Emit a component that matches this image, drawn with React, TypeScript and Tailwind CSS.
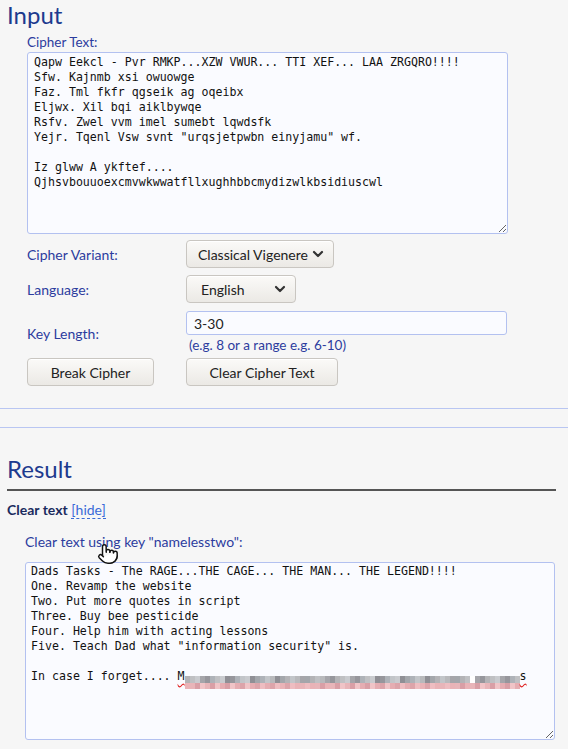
import { Pointer } from 'lucide-react'

const cipherText = `Qapw Eekcl - Pvr RMKP...XZW VWUR... TTI XEF... LAA ZRGQRO!!!!
Sfw. Kajnmb xsi owuowge
Faz. Tml fkfr qgseik ag oqeibx
Eljwx. Xil bqi aiklbywqe
Rsfv. Zwel vvm imel sumebt lqwdsfk
Yejr. Tqenl Vsw svnt "urqsjetpwbn einyjamu" wf.

Iz glww A ykftef....
Qjhsvbouuoexcmvwkwwatfllxughhbbcmydizwlkbsidiuscwl`

const clearLines = [
  'Dads Tasks - The RAGE...THE CAGE... THE MAN... THE LEGEND!!!!',
  'One. Revamp the website',
  'Two. Put more quotes in script',
  'Three. Buy bee pesticide',
  'Four. Help him with acting lessons',
  'Five. Teach Dad what "information security" is.',
  '',
]

const grays = ['#b3b3b6', '#a5a5aa', '#bfc0c3', '#96969c', '#c9cbcf', '#aeb2b8', '#8f8f95', '#c2c5c9', '#a3a6ab', '#b8b9bc']
const pinks = ['#e9b3b7', '#eebdc1', '#dca4aa', '#e5adb2', '#f0c4c7', '#d99fa6', '#e8b5b9']

// pixelated blur over the password
function Mosaic() {
  const cells = Array.from({ length: 67 }, (_, i) => ({
    top: grays[(i * 7 + (i % 3) * 5) % grays.length],
    bottom: pinks[(i * 5 + (i % 4)) % pinks.length],
  }))
  return (
    <span className="inline-flex align-[-3px]">
      {cells.map((c, i) => (
        <span key={i} className="flex flex-col w-[5px]">
          <span className="h-[7px]" style={{ background: i === 57 ? '#ffffff' : c.top }} />
          <span className="h-[6px]" style={{ background: c.bottom }} />
        </span>
      ))}
    </span>
  )
}

function Chevron() {
  return (
    <svg width="12" height="8" viewBox="0 0 12 8" fill="none" stroke="#333" strokeWidth={2.2} strokeLinecap="round" strokeLinejoin="round">
      <path d="M2 2l4 4 4-4" />
    </svg>
  )
}

const btn =
  'h-[28px] rounded-[4px] border border-[#c9c6c1] bg-gradient-to-b from-[#fbfaf8] to-[#ebe9e5] text-[14px] text-[#222] shadow-[inset_0_1px_0_#fff] whitespace-nowrap'

export default function App() {
  return (
    <div className="min-h-screen bg-[#f6f6f6] font-['Lato','Open_Sans',sans-serif] text-[#1f2f7f]">
      <div className="pl-[7px] pr-[12px]">
        <h2 className="pt-[1px] text-[24px] leading-[28px] text-[#1d3a8e]">Input</h2>
      </div>

      <div className="pl-[27px] pt-[5px]">
        <div className="text-[13.5px] leading-[16px] text-[#2c3c9e]">Cipher Text:</div>
        <textarea
          className="mt-[2px] block w-[481px] h-[182px] rounded-[3px] border border-[#b3c1f0] bg-[#fafbff] px-[6px] py-[2px] font-['DejaVu_Sans_Mono',monospace] text-[11.6px] leading-[15px] text-[#111] outline-none"
          defaultValue={cipherText}
          spellCheck={false}
        />

        <div className="mt-[6px] grid grid-cols-[159px_1fr] gap-y-[7px] items-center text-[14px] text-[#2c3c9e]">
          <div>Cipher Variant:</div>
          <div>
            <button className={`${btn} flex items-center gap-[4px] pl-[11px] pr-[9px] text-[13.5px]`}>
              Classical Vigenere <Chevron />
            </button>
          </div>

          <div>Language:</div>
          <div>
            <button className={`${btn} flex w-[110px] items-center justify-between pl-[14px] pr-[9px]`}>
              English <Chevron />
            </button>
          </div>

          <div className="pt-[2px]">Key Length:</div>
          <div className="pt-[1px]">
            <input
              className="block h-[24px] w-[321px] rounded-[3px] border border-[#b3c1f0] bg-[#fafbff] px-[7px] text-[14px] text-[#222] outline-none"
              defaultValue="3-30"
            />
            <div className="pl-[3px] pt-[2px] text-[13.5px] leading-[17px] text-[#2c3c9e]">(e.g. 8 or a range e.g. 6-10)</div>
          </div>
        </div>

        <div className="mt-[4px] grid grid-cols-[159px_1fr]">
          <div>
            <button className={`${btn} h-[27px] w-[127px]`}>Break Cipher</button>
          </div>
          <div>
            <button className={`${btn} h-[27px] w-[152px]`}>Clear Cipher Text</button>
          </div>
        </div>
      </div>

      <div className="mt-[22px] border-t border-[#b9c6f2]" />
      <div className="mt-[18px] border-t border-[#b9c6f2]" />

      <div className="pl-[7px] pr-[12px] pt-[27px]">
        <h2 className="text-[24px] leading-[28px] text-[#1d3a8e] pb-[6px] border-b-2 border-[#555]">Result</h2>
        <div className="pt-[10px] text-[14px] leading-[18px]">
          <span className="font-bold text-[#1b2b5e]">Clear text</span>{' '}
          <span className="text-[#3a6ad8] border-b border-dashed border-[#3a6ad8]">[hide]</span>
        </div>
      </div>

      <div className="relative pl-[25px] pr-[13px] pt-[14px]">
        <div className="text-[14px] leading-[18px] text-[#2c3c9e]">Clear text using key "namelesstwo":</div>
        <Pointer className="absolute left-[97px] top-[24px]" size={22} fill="#fff" stroke="#111" strokeWidth={1.6} />
        <div className="mt-[11px] h-[178px] w-[530px] resize overflow-auto rounded-[3px] border border-[#b3c1f0] bg-[#fafbff] px-[5px] py-[1px] font-['DejaVu_Sans_Mono',monospace] text-[11.6px] leading-[15px] text-[#111] whitespace-pre">
          {clearLines.map((l, i) => (
            <div key={i} className="h-[15px]">{l}</div>
          ))}
          <div className="h-[15px]">
            In case I forget....{' '}
            <span className="underline decoration-wavy decoration-[#e02020] underline-offset-[3px]">M</span>
            <Mosaic />
            <span className="underline decoration-wavy decoration-[#e02020] underline-offset-[3px]">s</span>
          </div>
        </div>
      </div>
    </div>
  )
}
